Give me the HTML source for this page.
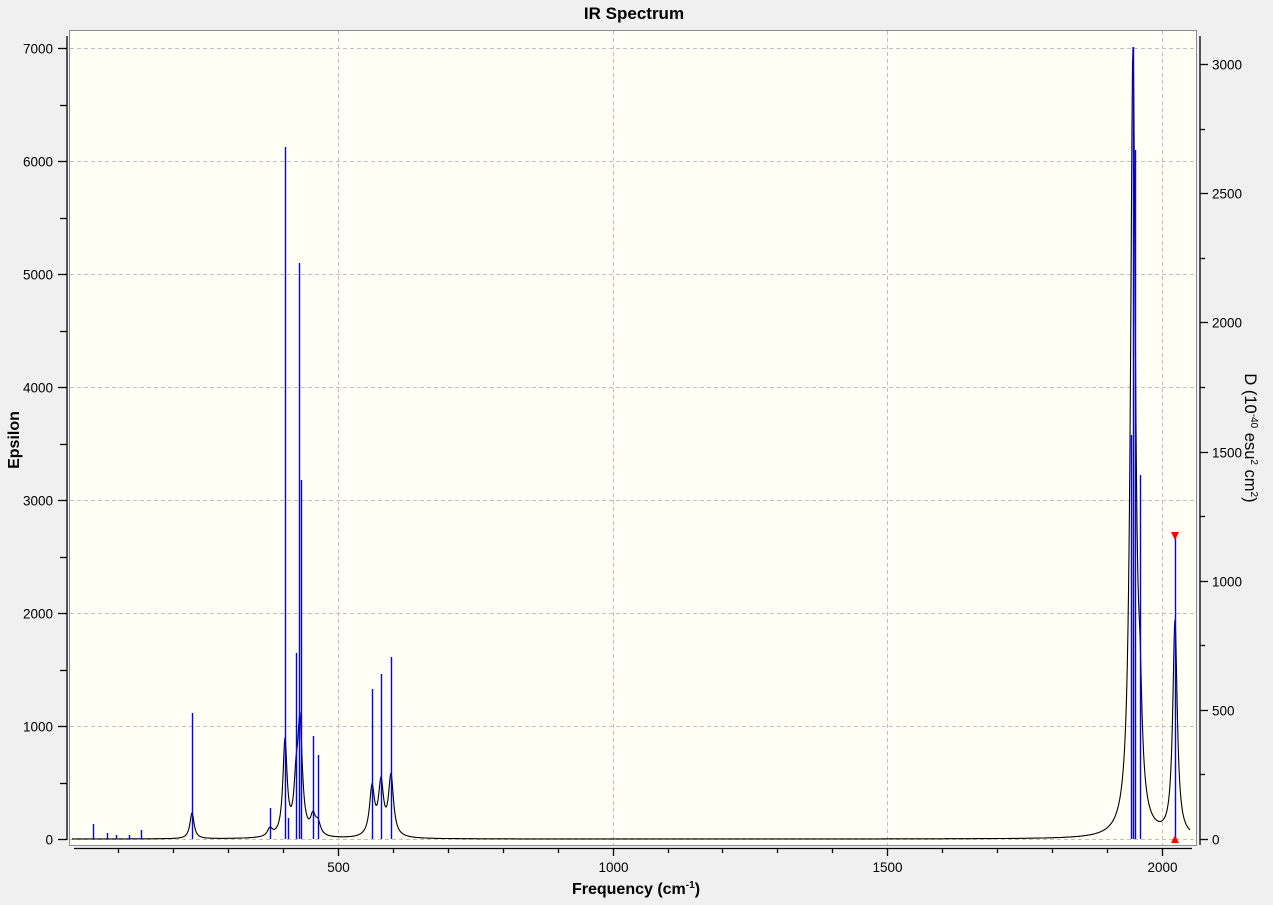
<!DOCTYPE html>
<html><head><meta charset="utf-8"><style>
html,body{margin:0;padding:0;background:#f0f0f0;width:1273px;height:905px;overflow:hidden}
svg{display:block;font-family:"Liberation Sans",sans-serif}
</style></head><body>
<svg id="s" width="1273" height="905" xmlns="http://www.w3.org/2000/svg">
<rect x="0" y="0" width="1273" height="905" fill="#f0f0f0"/>
<rect x="69.5" y="30.5" width="1127" height="815" fill="#fffff5" stroke="#868a92" stroke-width="1"/>
<g id="grid" stroke="#c0c0c0" stroke-dasharray="4,3" stroke-width="1"></g>
<g id="axes" stroke="#000" stroke-width="1.3"></g>
<g id="labels" font-size="13.5" fill="#000"></g>
<path id="curve" fill="none" stroke="#000" stroke-width="1.1"/>
<g id="sticks" stroke="#0000ff" stroke-width="1.4"></g>
<path d="M1171,532 L1179,532 L1175,540 Z" fill="#ff0000"/>
<path d="M1171,843 L1179,843 L1175,835 Z" fill="#ff0000"/>
<text x="634" y="19" font-size="17" font-weight="bold" text-anchor="middle">IR Spectrum</text>
<text transform="translate(19,440) rotate(-90)" font-size="16" font-weight="bold" text-anchor="middle">Epsilon</text>
<text x="636" y="894" font-size="16" font-weight="bold" text-anchor="middle">Frequency (cm<tspan font-size="10" dy="-6">-1</tspan><tspan dy="6">)</tspan></text>
<text transform="translate(1245,438) rotate(90)" font-size="16.5" text-anchor="middle">D (10<tspan font-size="10" dy="-6">-40</tspan><tspan dy="6"> esu</tspan><tspan font-size="10" dy="-6">2</tspan><tspan dy="6"> cm</tspan><tspan font-size="10" dy="-6">2</tspan><tspan dy="6">)</tspan></text>
</svg>
<script>
var NS="http://www.w3.org/2000/svg";
function el(p,t,a,txt){var e=document.createElementNS(NS,t);for(var k in a)e.setAttribute(k,a[k]);if(txt!==undefined)e.textContent=txt;document.getElementById(p).appendChild(e);}
var X=function(f){return 63.3+f*0.5493;};
var Y=function(e){return 839-e*0.113;};
for(var i=0;i<=7;i++){var y=Math.round(Y(i*1000))+0.5;el("grid","line",{x1:70,x2:1196,y1:y,y2:y});}
[500,1000,1500,2000].forEach(function(f){var x=Math.round(X(f))+0.5;el("grid","line",{x1:x,x2:x,y1:31,y2:845});});
el("axes","line",{x1:67,x2:67,y1:36,y2:840});
for(var i=0;i<=14;i++){var y=Math.round(Y(i*500))+0.5;var maj=i%2==0;el("axes","line",{x1:maj?58:60,x2:67,y1:y,y2:y});if(maj)el("labels","text",{x:53,y:y+5,"text-anchor":"end"},String(i*500));}
el("axes","line",{x1:74,x2:1192,y1:848.5,y2:848.5});
for(var f=100;f<=2000;f+=100){var x=Math.round(X(f))+0.5;var maj=f%500==0;el("axes","line",{x1:x,x2:x,y1:848,y2:maj?856:853});if(maj)el("labels","text",{x:x,y:872,"text-anchor":"middle"},String(f));}
el("axes","line",{x1:1200,x2:1200,y1:36,y2:845});
for(var i=0;i<=12;i++){var v=i*250;var y=Math.round(839-v*0.2583)+0.5;var maj=i%2==0;el("axes","line",{x1:1200,x2:maj?1208:1205,y1:y,y2:y});if(maj)el("labels","text",{x:1212,y:y+5},String(v));}
var st=[[93,824],[107,833],[116,835],[129,835],[141,830],[192,713],[270,808],[285,147],[288,818],[296,653],[299,263],[301,480],[313,736],[318,755],[372,689],[381,674],[391,657],[1131,435],[1133,47],[1135,150],[1140,475],[1175,535]];
st.forEach(function(s){el("sticks","line",{x1:s[0]+0.5,x2:s[0]+0.5,y1:s[1],y2:839});});
var pk=[[192,26,2.5],[270,8,3],[285,95,2.5],[296,40,2.5],[300,110,2.8],[313,18,3],[318,12,3],[372,48,3],[381,52,3],[391,60,3],[1133,785,3],[1140,80,2.5],[1175,215,2.7]];
var d="";for(var x=72;x<=1190;x+=0.5){var h=0;pk.forEach(function(p){var dx=x-p[0];h+=p[1]*p[2]*p[2]/(dx*dx+p[2]*p[2]);});var y=Math.max(839-h,47);d+=(x==72?"M":"L")+x+","+y.toFixed(1);}
document.getElementById("curve").setAttribute("d",d);
</script>
</body></html>
